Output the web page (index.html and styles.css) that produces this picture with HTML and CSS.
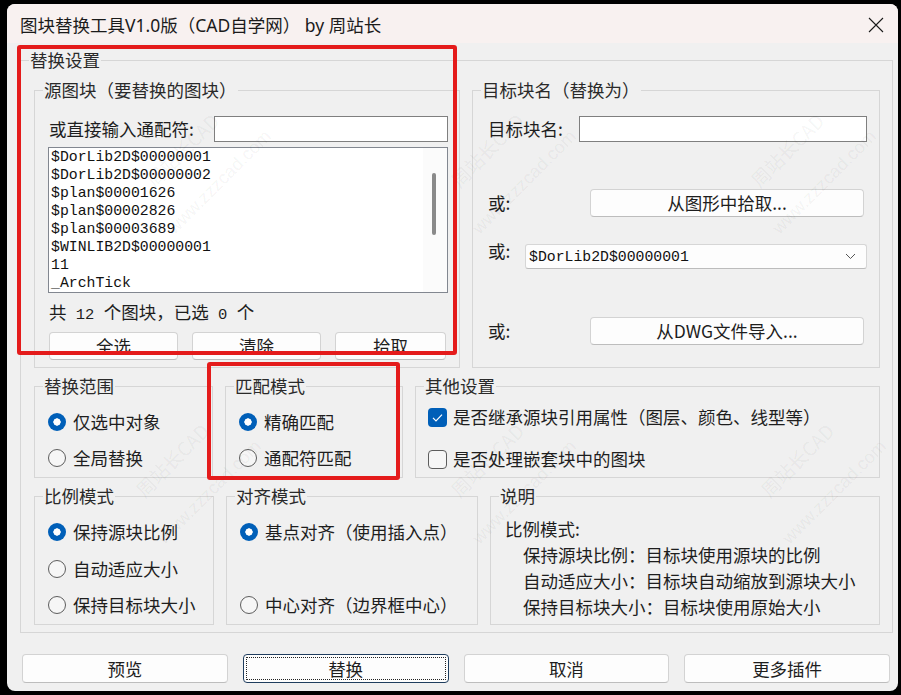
FILE: index.html
```html
<!DOCTYPE html>
<html lang="zh-CN">
<head>
<meta charset="utf-8">
<title>图块替换工具V1.0版</title>
<link rel="stylesheet" href="styles.css">
</head>
<body>
<div class="window">
  <header class="titlebar">
    <span class="title">图块替换工具V1.0版（CAD自学网） by 周站长</span>
    <svg class="close" width="16" height="16" viewBox="0 0 16 16"><path d="M1 1L15 15M15 1L1 15" stroke="#1b1b1b" stroke-width="1.1" fill="none"/></svg>
  </header>
  <main class="client">
    <fieldset class="grp outer">
      <legend>替换设置</legend>
      <div class="outer-body">
        <div class="row row1">
          <fieldset class="grp">
            <legend>源图块（要替换的图块）</legend>
            <div class="src-body">
              <div class="line"><span>或直接输入通配符:</span><span class="input wild"></span></div>
              <div class="listbox">
                <ul class="items">
                  <li>$DorLib2D$00000001</li>
                  <li>$DorLib2D$00000002</li>
                  <li>$plan$00001626</li>
                  <li>$plan$00002826</li>
                  <li>$plan$00003689</li>
                  <li>$WINLIB2D$00000001</li>
                  <li>11</li>
                  <li>_ArchTick</li>
                </ul>
                <div class="vscroll"><span class="thumb"></span></div>
              </div>
              <div class="count">共<span class="hw"> 12 </span>个图块，已选<span class="hw"> 0 </span>个</div>
              <div class="btnrow">
                <button class="btn">全选</button>
                <button class="btn">清除</button>
                <button class="btn">拾取</button>
              </div>
            </div>
          </fieldset>
          <fieldset class="grp">
            <legend>目标块名（替换为）</legend>
            <div class="tgt-body">
              <div class="trow"><span>目标块名:</span><span class="input tname"></span></div>
              <div class="trow r2"><span>或:</span><button class="btn wide">从图形中拾取...</button></div>
              <div class="trow r3"><span class="up">或:</span>
                <span class="combo"><span class="mono">$DorLib2D$00000001</span>
                  <svg width="11" height="7" viewBox="0 0 11 7"><path d="M1 1L5.5 5.5L10 1" stroke="#555" stroke-width="1" fill="none"/></svg>
                </span>
              </div>
              <div class="trow r4"><span>或:</span><button class="btn wide">从DWG文件导入...</button></div>
            </div>
          </fieldset>
        </div>

        <div class="row row2">
          <fieldset class="grp">
            <legend>替换范围</legend>
            <div class="opts">
              <div class="opt"><span class="radio on"></span>仅选中对象</div>
              <div class="opt"><span class="radio"></span>全局替换</div>
            </div>
          </fieldset>
          <fieldset class="grp">
            <legend>匹配模式</legend>
            <div class="opts">
              <div class="opt"><span class="radio on"></span>精确匹配</div>
              <div class="opt"><span class="radio"></span>通配符匹配</div>
            </div>
          </fieldset>
          <fieldset class="grp">
            <legend>其他设置</legend>
            <div class="opts checks">
              <div class="opt"><span class="check on"><svg width="19" height="19" viewBox="0 0 19 19"><path d="M5 9.8L8 12.8L14 6.6" stroke="#fff" stroke-width="1.2" fill="none"/></svg></span>是否继承源块引用属性（图层、颜色、线型等）</div>
              <div class="opt"><span class="check"></span>是否处理嵌套块中的图块</div>
            </div>
          </fieldset>
        </div>

        <div class="row row3">
          <fieldset class="grp">
            <legend>比例模式</legend>
            <div class="opts three">
              <div class="opt"><span class="radio on"></span>保持源块比例</div>
              <div class="opt"><span class="radio"></span>自动适应大小</div>
              <div class="opt"><span class="radio"></span>保持目标块大小</div>
            </div>
          </fieldset>
          <fieldset class="grp">
            <legend>对齐模式</legend>
            <div class="opts align">
              <div class="opt"><span class="radio on"></span>基点对齐（使用插入点）</div>
              <div class="opt"><span class="radio"></span>中心对齐（边界框中心）</div>
            </div>
          </fieldset>
          <fieldset class="grp">
            <legend>说明</legend>
            <div class="desc">
              <div>比例模式:</div>
              <div class="ind">保持源块比例：目标块使用源块的比例</div>
              <div class="ind">自动适应大小：目标块自动缩放到源块大小</div>
              <div class="ind">保持目标块大小：目标块使用原始大小</div>
            </div>
          </fieldset>
        </div>
      </div>
    </fieldset>

    <div class="actions">
      <button class="btn">预览</button>
      <button class="btn default">替换</button>
      <button class="btn">取消</button>
      <button class="btn">更多插件</button>
    </div>
  </main>

  <div class="wm" aria-hidden="true">
    <span class="w1" style="left:128px;top:136px">周站长CAD</span>
    <span class="w2" style="left:143px;top:168px">www.zzzcad.com</span>
    <span class="w1" style="left:433px;top:136px">周站长CAD</span>
    <span class="w2" style="left:448px;top:168px">www.zzzcad.com</span>
    <span class="w1" style="left:733px;top:136px">周站长CAD</span>
    <span class="w2" style="left:748px;top:168px">www.zzzcad.com</span>
    <span class="w1" style="left:118px;top:446px">周站长CAD</span>
    <span class="w2" style="left:133px;top:478px">www.zzzcad.com</span>
    <span class="w1" style="left:433px;top:446px">周站长CAD</span>
    <span class="w2" style="left:448px;top:478px">www.zzzcad.com</span>
    <span class="w1" style="left:743px;top:446px">周站长CAD</span>
    <span class="w2" style="left:758px;top:478px">www.zzzcad.com</span>
  </div>

  <div class="mark m1"></div>
  <div class="mark m2"></div>
</div>
</body>
</html>
```

FILE: styles.css
```css
* { box-sizing: border-box; }
html, body { margin: 0; background: #000; }
body {
  width: 901px; height: 695px; overflow: hidden;
  font-family: "Noto Sans CJK SC", "Noto Sans", sans-serif;
  font-size: 17.5px; color: #1e1e1e;
}
.window {
  position: relative;
  margin: 4px 0 0 7px;
  width: 891px; height: 687px;
  background: #f0f0f0;
  border-radius: 8px;
  overflow: hidden;
}
.titlebar {
  height: 39px;
  background: #f8f1f0;
  display: flex; align-items: center; justify-content: space-between;
  padding: 2px 14px 0 13px;
}
.title { line-height: 20px; color: #1b1b1b; font-family: "Noto Sans", "Noto Sans CJK SC", sans-serif; }
.close { display: block; }

.client { padding: 7px 5px 0 13px; }

.grp { margin: 0; padding: 0; border: 1px solid #d6d6d6; min-width: 0; }
.grp > legend {
  margin-left: 8px; padding: 0 1px;
  line-height: 20px; font-size: 17.5px; color: #2a2a2a;
}
.outer-body { padding: 10px 12px 7px 13px; display: flex; flex-direction: column; gap: 8px; }
.row { display: grid; column-gap: 12px; }
.row1 { grid-template-columns: 426px 408px; }
.row2 { grid-template-columns: 179px 178px 465px; }
.row3 { grid-template-columns: 180px 252px 390px; }

/* source */
.src-body { padding: 16px 11px 7px 13px; }
.line { display: flex; align-items: center; justify-content: space-between; padding-left: 1px; line-height: 20px; }
.input { display: block; height: 26px; background: #fff; border: 1px solid #7f7f7f; }
.wild { width: 234px; }
.listbox { margin-top: 5px; height: 146px; border: 1px solid #828790; background: #fff; display: flex; }
.items {
  flex: 1; margin: 0; padding: 0 0 0 2px; list-style: none; overflow: hidden;
  font-family: "Liberation Mono", monospace; font-size: 14.8px; line-height: 18px; color: #111;
}
.vscroll { width: 24px; background: #fbfbfb; padding: 25px 0 0 9px; }
.thumb { display: block; width: 4px; height: 62px; border-radius: 2px; background: #8a8a8a; }
.count { margin-top: 9px; height: 20px; line-height: 20px; padding-left: 1px; display: flex; align-items: baseline; white-space: pre; }
.hw { font-family: "Liberation Mono", monospace; font-size: 15.5px; line-height: 20px; }
.btnrow { margin-top: 10px; padding-left: 1px; display: grid; grid-template-columns: 129px 129px 111px; column-gap: 14px; }

.btn {
  display: flex; align-items: center; justify-content: center;
  height: 28px; margin: 0; padding: 0;
  font: inherit; font-size: 17.5px; line-height: 20px; color: #1e1e1e;
  background: #fdfdfd;
  border: 1px solid #d3d3d3; border-bottom-color: #bdbdbd;
  border-radius: 4px;
}

/* target */
.tgt-body { padding: 16px 12px 0 15px; }
.trow { display: flex; align-items: center; justify-content: space-between; line-height: 20px; }
.r2 { margin-top: 47px; padding-right: 3px; }
.r3 { margin-top: 27px; align-items: flex-start; }
.r4 { margin-top: 48px; padding-right: 3px; }
.up { margin-top: -3px; }
.tname { width: 288px; }
.wide { width: 274px; }
.combo {
  width: 342px; height: 25px;
  display: flex; align-items: center; justify-content: space-between;
  padding: 0 10px 0 3px;
  background: #fdfdfd; border: 1px solid #d6d6d6; border-bottom-color: #bcbcbc; border-radius: 3px;
}
.mono { font-family: "Liberation Mono", monospace; font-size: 14.8px; line-height: 18px; color: #111; }

/* options */
.opts { padding: 16px 8px 9px 13px; display: flex; flex-direction: column; gap: 16px; }
.opts.checks { padding: 11px 8px 8px 12px; gap: 22px; }
.opts.three { gap: 16.5px; padding-bottom: 8px; }
.opts.align .opt + .opt { margin-top: 37px; }
.opt { display: flex; align-items: center; gap: 7px; height: 20px; line-height: 20px; white-space: nowrap; }
.checks .opt { gap: 6px; }
.radio {
  flex: none; width: 18px; height: 18px; border-radius: 50%;
  border: 1px solid #5d5d5d; background: #f6f6f6;
}
.radio.on { border: none; background: radial-gradient(circle at center, #fff 0 3.4px, #005fb8 3.9px); }
.check {
  flex: none; width: 19px; height: 19px; border-radius: 4px;
  border: 1px solid #5d5d5d; background: #f6f6f6;
}
.check.on { border: none; background: #005fb8; }
.check svg { display: block; }

.desc { padding: 10px 8px 3px 14px; line-height: 26px; }
.desc .ind { padding-left: 18px; }

.actions { margin: 21px 3px 0 2px; display: grid; grid-template-columns: repeat(4, 1fr); column-gap: 15px; }
.actions .btn { height: 29px; }
.btn.default { border: 1px solid #1f3d5e; outline: 1px dotted #222; outline-offset: -4px; }

/* watermark overlay */
.wm { position: absolute; inset: 0; pointer-events: none; }
.wm span {
  position: absolute; white-space: nowrap;
  transform: rotate(-45deg); transform-origin: center;
  color: rgba(0, 0, 0, 0.055); font-size: 19px; line-height: 20px;
}
.wm .w2 { font-family: "Liberation Sans", sans-serif; font-size: 18px; }

/* red annotation boxes */
.mark { position: absolute; border: 4px solid #e41b1b; border-radius: 3px; pointer-events: none; }
.m1 { left: 10px; top: 41px; width: 440px; height: 310px; }
.m2 { left: 200px; top: 358px; width: 193px; height: 118px; }
```
